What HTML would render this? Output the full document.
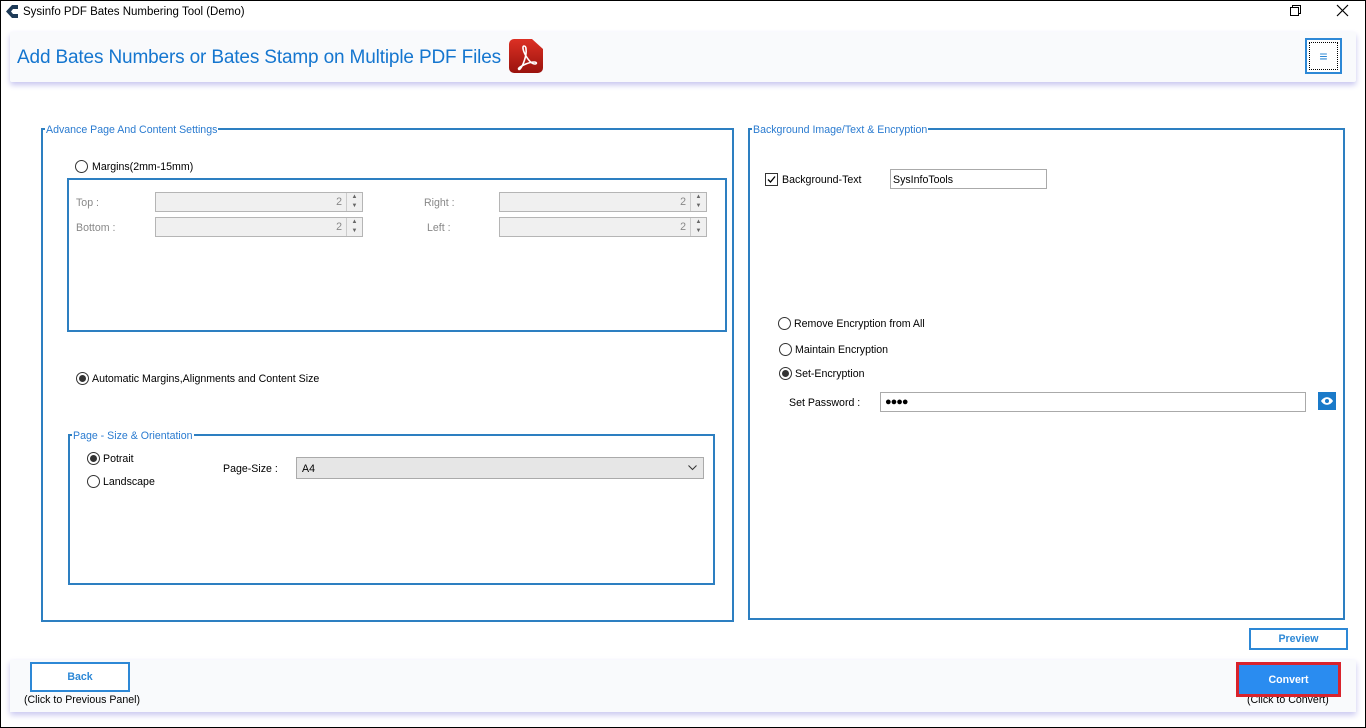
<!DOCTYPE html>
<html><head><style>
*{margin:0;padding:0;box-sizing:border-box}
body{width:1366px;height:728px;background:#fff;font-family:"Liberation Sans",sans-serif;font-size:10.6px;color:#000;position:relative;overflow:hidden}
.frame{position:absolute;left:0;top:0;width:1366px;height:728px;border:1px solid #000;pointer-events:none}
.a{position:absolute}
.t{position:absolute;margin-top:1px}
.gb{position:absolute;border:2px solid #2d7fc1}
.gt{position:absolute;top:-7px;left:2px;background:#fff;color:#2a7bd0;font-size:10.6px;padding:0 1px;line-height:14px}
.radio{position:absolute;width:13px;height:13px;border:1px solid #333;border-radius:50%;background:#fff}
.radio.on::after{content:"";position:absolute;left:2px;top:2px;width:7px;height:7px;border-radius:50%;background:#333}
.num{position:absolute;height:20px;border:1px solid #b5b5b5;background:#f0f0f0;color:#888;text-align:right;padding-right:20px;line-height:19px}
.num .sp{position:absolute;right:0;top:0;width:16px;height:18px;border-left:1px solid #ccc;font-size:6px;line-height:9px;text-align:center;color:#666}
.lbl{position:absolute;color:#888;margin-top:1px}
</style></head><body>
<svg class="a" style="left:5px;top:4px" width="14" height="15" viewBox="0 0 14 15"><path d="M7 1 L1 7.5 L7 14 L13 14 L13 10 L8 10 L6 7.5 L8 5 L13 5 L13 1Z" fill="#1d3a57"/><path d="M9 5.5h3M8 7.5h4M9 9.5h3" stroke="#fff" stroke-width="1"/></svg>
<div class="a" style="left:23px;top:6px;font-size:11.5px">Sysinfo PDF Bates Numbering Tool (Demo)</div>
<svg class="a" style="left:1236px;top:4px" width="120" height="14"><rect x="54.5" y="3.5" width="8" height="8" fill="none" stroke="#000"/><path d="M56.5 3.5v-2h8v8h-2" fill="none" stroke="#000"/><path d="M101 1l11 11M112 1l-11 11" stroke="#000" stroke-width="1.2"/></svg>

<div class="a" style="left:10px;top:32px;width:1346px;height:50px;background:#f9fafc;box-shadow:0 3px 6px #c8c6f0;border-radius:2px"></div>
<div class="a" style="left:17px;top:47px;font-size:19px;color:#1576cf;letter-spacing:-0.15px">Add Bates Numbers or Bates Stamp on Multiple PDF Files</div>
<svg class="a" style="left:509px;top:39px" width="34" height="34" viewBox="0 0 34 34"><defs><linearGradient id="g" x1="0" y1="0" x2="0" y2="1"><stop offset="0" stop-color="#dc3024"/><stop offset="1" stop-color="#9a130e"/></linearGradient></defs><path d="M5 0h18l11 10v19a5 5 0 0 1-5 5H5a5 5 0 0 1-5-5V5a5 5 0 0 1 5-5z" fill="url(#g)"/><path d="M15 7c-2 0-1 5 2 10s6 8 9 8c2 0 2-2-1-2-4 0-12 3-15 6-1 1 0 2 1 1 3-3 7-14 6-20 0-2-1-3-2-3z" fill="none" stroke="#fff" stroke-width="1.6"/></svg>
<div class="a" style="left:1305px;top:38px;width:37px;height:36px;border:2px solid #2d88d6;background:#fff"><div style="margin:2px;height:28px;border:1px dotted #000;color:#2d88d6;text-align:center;line-height:26px;font-size:14px">&#8801;</div></div>

<div class="gb" style="left:41px;top:128px;width:693px;height:494px"><div class="gt">Advance Page And Content Settings</div></div>
<div class="radio" style="left:75px;top:160px"></div>
<div class="t" style="left:92px;top:160px">Margins(2mm-15mm)</div>
<div class="gb" style="left:67px;top:178px;width:660px;height:154px"></div>
<div class="lbl" style="left:76px;top:196px">Top :</div>
<div class="lbl" style="left:76px;top:221px">Bottom :</div>
<div class="lbl" style="left:424px;top:196px">Right :</div>
<div class="lbl" style="left:427px;top:221px">Left :</div>
<div class="num" style="left:155px;top:192px;width:208px">2<div class="sp">▲<br>▼</div></div>
<div class="num" style="left:155px;top:217px;width:208px">2<div class="sp">▲<br>▼</div></div>
<div class="num" style="left:499px;top:192px;width:208px">2<div class="sp">▲<br>▼</div></div>
<div class="num" style="left:499px;top:217px;width:208px">2<div class="sp">▲<br>▼</div></div>
<div class="radio on" style="left:76px;top:372px"></div>
<div class="t" style="left:92px;top:372px">Automatic Margins,Alignments and Content Size</div>
<div class="gb" style="left:68px;top:434px;width:647px;height:151px"><div class="gt">Page - Size &amp; Orientation</div></div>
<div class="radio on" style="left:87px;top:452px"></div>
<div class="t" style="left:103px;top:452px">Potrait</div>
<div class="radio" style="left:87px;top:475px"></div>
<div class="t" style="left:103px;top:475px">Landscape</div>
<div class="t" style="left:223px;top:462px">Page-Size :</div>
<div class="a" style="left:296px;top:457px;width:408px;height:22px;border:1px solid #aaa;background:#e6e6e6;padding:5px 5px">A4<svg style="position:absolute;right:6px;top:7px" width="9" height="6"><path d="M0.5 0.5l4 4 4-4" fill="none" stroke="#333"/></svg></div>

<div class="gb" style="left:748px;top:128px;width:597px;height:492px"><div class="gt">Background Image/Text &amp; Encryption</div></div>
<div class="a" style="left:765px;top:173px;width:13px;height:13px;border:1px solid #333"><svg width="11" height="11" style="position:absolute;left:0;top:0"><path d="M2 5.5l2.5 2.5 4.5-5.5" fill="none" stroke="#000" stroke-width="1.3"/></svg></div>
<div class="t" style="left:782px;top:173px">Background-Text</div>
<div class="a" style="left:890px;top:169px;width:157px;height:20px;border:1px solid #aaa;padding:4px 2px">SysInfoTools</div>
<div class="radio" style="left:778px;top:317px"></div>
<div class="t" style="left:794px;top:317px">Remove Encryption from All</div>
<div class="radio" style="left:779px;top:343px"></div>
<div class="t" style="left:795px;top:343px">Maintain Encryption</div>
<div class="radio on" style="left:779px;top:367px"></div>
<div class="t" style="left:795px;top:367px">Set-Encryption</div>
<div class="t" style="left:789px;top:396px">Set Password :</div>
<div class="a" style="left:880px;top:392px;width:426px;height:20px;border:1px solid #aaa;padding:3px 4px;font-size:11px;letter-spacing:-1px">&#9679;&#9679;&#9679;&#9679;</div>
<svg class="a" style="left:1318px;top:392px" width="18" height="18"><rect width="18" height="18" fill="#1a7ac9"/><path d="M3 9c3-5 9-5 12 0c-3 5-9 5-12 0z" fill="#fff"/><circle cx="9" cy="9" r="2" fill="#1a7ac9"/></svg>

<div class="a" style="left:1249px;top:628px;width:99px;height:22px;border:2px solid #2d88d6;color:#2d88d6;font-weight:bold;text-align:center;line-height:19px">Preview</div>

<div class="a" style="left:10px;top:660px;width:1346px;height:52px;background:#f9fafc;box-shadow:0 3px 6px #c8c6f0"></div>
<div class="a" style="left:30px;top:662px;width:100px;height:30px;border:2px solid #2d88d6;background:#fff;color:#2d88d6;font-weight:bold;text-align:center;line-height:27px">Back</div>
<div class="t" style="left:24px;top:693px">(Click to Previous Panel)</div>
<div class="t" style="left:1247px;top:693px">(Click to Convert)</div>
<div class="a" style="left:1236px;top:662px;width:105px;height:35px;border:3px solid #d9232c;background:#2a8cf0;color:#fff;font-weight:bold;text-align:center;line-height:30px">Convert</div>
<div class="frame"></div>
</body></html>
